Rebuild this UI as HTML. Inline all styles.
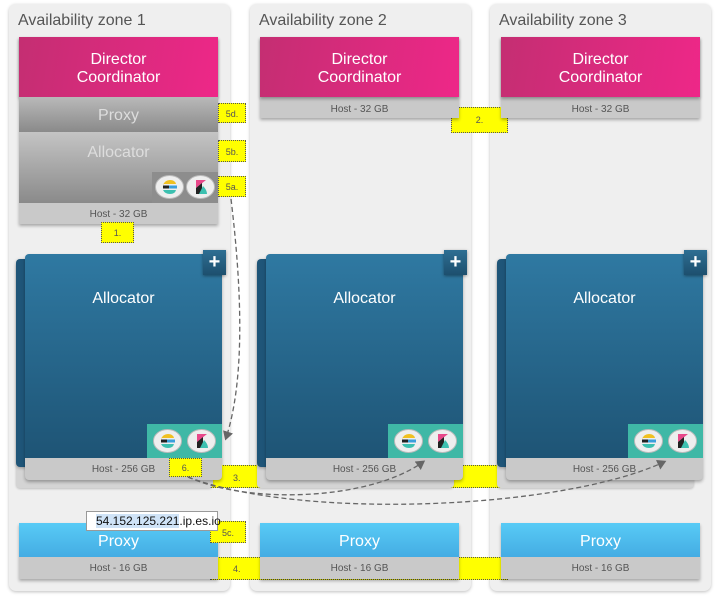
<!DOCTYPE html>
<html><head><style>
*{box-sizing:border-box;margin:0;padding:0}
body{width:718px;height:598px;background:#fff;position:relative;overflow:hidden;font-family:"Liberation Sans",Arial,sans-serif}
.abs{position:absolute}
.zone{position:absolute;top:4px;width:221px;height:587px;background:#efefef;border-radius:7px;box-shadow:0 1px 3px rgba(0,0,0,.25)}
.zt{position:absolute;left:9px;top:8px;font-size:16px;color:#555}
.dir{position:absolute;height:60px;width:199px;background:linear-gradient(100deg,#c42e72,#ee2788);color:#fff;font-size:16px;text-align:center;line-height:18px;padding-top:14px;box-shadow:0 2px 3px rgba(0,0,0,.3)}
.host{position:absolute;background:#c9c9c9;color:#555;font-size:10px;text-align:center;box-shadow:0 2px 3px rgba(0,0,0,.3)}
.y{position:absolute;background:#ffff00;border:1px dotted #555;font-size:9px;color:#555;text-align:center}
.back{position:absolute;background:#1f5578;border-radius:4px;box-shadow:0 1px 3px rgba(0,0,0,.3)}
.backh{position:absolute;background:#d4d4d4;border-radius:4px;box-shadow:0 1px 2px rgba(0,0,0,.2)}
.alloc{position:absolute;width:197px;height:204px;background:linear-gradient(#2f79a2,#1e5475);border-radius:4px 4px 0 0;color:#fff;font-size:16px;text-align:center;padding-top:36px}
.plus{position:absolute;width:23px;height:25px;background:linear-gradient(#2e6f93,#1d4f6e);color:#fff;font-size:20px;font-weight:bold;text-align:center;line-height:24px;box-shadow:0 1px 3px rgba(0,0,0,.4)}
.bar{position:absolute;width:75px;height:34px;background:#3fb8a6}
.ic{position:absolute;width:29px;height:24px}
.prox{position:absolute;width:199px;height:34px;background:linear-gradient(#58cbf6,#44ace3);color:#fff;font-size:16px;text-align:center;line-height:37px}
</style></head><body>
<svg width="0" height="0" style="position:absolute">
<defs>
<g id="es"><ellipse cx="14.5" cy="12" rx="14" ry="11.5" fill="#eee" stroke="#bbb" stroke-width="1"/>
<path d="M8,10 Q10,5 15,5 Q20,5 21,9 L8,9Z" fill="#f0c020"/>
<rect x="8" y="10.5" width="6" height="3" fill="#222"/><rect x="14" y="10.5" width="8" height="3" fill="#3a9fdc"/>
<path d="M8,15 L21,15 Q20,19 15,19 Q10,19 8,15Z" fill="#3cc0b0"/></g>
<g id="kb"><ellipse cx="14.5" cy="12" rx="14" ry="11.5" fill="#eee" stroke="#bbb" stroke-width="1"/>
<path d="M10,5 L20,5 L10,13Z" fill="#e8488a"/><path d="M10,13 L16,8 L16,19 L10,19Z" fill="#222"/>
<path d="M13,19 L17,11 Q21,15 21,19Z" fill="#3cc0b0"/></g>
</defs></svg>

<div class="zone" style="left:9px"><div class="zt">Availability zone 1</div></div>
<div class="zone" style="left:250px"><div class="zt">Availability zone 2</div></div>
<div class="zone" style="left:490px"><div class="zt">Availability zone 3</div></div>

<div class="y" style="left:210px;top:465px;width:298px;height:23px;line-height:24px;text-align:left;padding-left:22px">3.</div>
<div class="y" style="left:210px;top:557px;width:298px;height:23px;line-height:22px;text-align:left;padding-left:22px">4.</div>
<div class="y" style="left:451px;top:107px;width:57px;height:26px;line-height:24px">2.</div>

<div class="host" style="left:19px;top:37px;width:199px;height:187px;padding-top:172px">Host - 32 GB</div>
<div class="dir" style="left:19px;top:37px">Director<br>Coordinator</div>
<div class="abs" style="left:19px;top:97px;width:199px;height:35px;background:linear-gradient(#b9b9b9,#8a8a8a);color:#ddd;font-size:16px;text-align:center;line-height:37px">Proxy</div>
<div class="abs" style="left:19px;top:132px;width:199px;height:71px;background:linear-gradient(#c4c4c4,#8a8a8a);color:#ddd;font-size:16px;text-align:center;padding-top:12px">Allocator</div>
<div class="abs" style="left:152px;top:172px;width:66px;height:31px;background:#8d8d8d"></div>
<svg class="ic" style="left:155px;top:175px"><use href="#es"/></svg><svg class="ic" style="left:186px;top:175px"><use href="#kb"/></svg>
<div class="y" style="left:101px;top:222px;width:33px;height:21px;line-height:20px">1.</div>
<div class="y" style="left:218px;top:103px;width:28px;height:20px;line-height:20px">5d.</div>
<div class="y" style="left:218px;top:140px;width:28px;height:22px;line-height:22px">5b.</div>
<div class="y" style="left:218px;top:176px;width:28px;height:21px;line-height:21px">5a.</div>

<div class="host" style="left:260px;top:37px;width:199px;height:81px;padding-top:67px">Host - 32 GB</div>
<div class="dir" style="left:260px;top:37px">Director<br>Coordinator</div>
<div class="host" style="left:501px;top:37px;width:199px;height:81px;padding-top:67px">Host - 32 GB</div>
<div class="dir" style="left:501px;top:37px">Director<br>Coordinator</div>

<div class="backh" style="left:16px;top:262px;width:197px;height:226px"></div>
<div class="back" style="left:16px;top:259px;width:197px;height:208px"></div>
<div class="host" style="left:25px;top:254px;width:197px;height:226px;padding-top:210px;border-radius:4px">Host - 256 GB</div>
<div class="alloc" style="left:25px;top:254px">Allocator</div>
<div class="plus" style="left:203px;top:250px">+</div>
<div class="bar" style="left:147px;top:424px"></div>
<svg class="ic" style="left:153px;top:429px"><use href="#es"/></svg><svg class="ic" style="left:187px;top:429px"><use href="#kb"/></svg>

<div class="backh" style="left:257px;top:262px;width:197px;height:226px"></div>
<div class="back" style="left:257px;top:259px;width:197px;height:208px"></div>
<div class="host" style="left:266px;top:254px;width:197px;height:226px;padding-top:210px;border-radius:4px">Host - 256 GB</div>
<div class="alloc" style="left:266px;top:254px">Allocator</div>
<div class="plus" style="left:444px;top:250px">+</div>
<div class="bar" style="left:388px;top:424px"></div>
<svg class="ic" style="left:394px;top:429px"><use href="#es"/></svg><svg class="ic" style="left:428px;top:429px"><use href="#kb"/></svg>

<div class="backh" style="left:497px;top:262px;width:197px;height:226px"></div>
<div class="back" style="left:497px;top:259px;width:197px;height:208px"></div>
<div class="host" style="left:506px;top:254px;width:197px;height:226px;padding-top:210px;border-radius:4px">Host - 256 GB</div>
<div class="alloc" style="left:506px;top:254px">Allocator</div>
<div class="plus" style="left:684px;top:250px">+</div>
<div class="bar" style="left:628px;top:424px"></div>
<svg class="ic" style="left:634px;top:429px"><use href="#es"/></svg><svg class="ic" style="left:668px;top:429px"><use href="#kb"/></svg>

<div class="y" style="left:169px;top:458px;width:33px;height:19px;line-height:18px">6.</div>

<div class="host" style="left:19px;top:523px;width:199px;height:56px;padding-top:40px">Host - 16 GB</div>
<div class="prox" style="left:19px;top:523px">Proxy</div>
<div class="host" style="left:260px;top:523px;width:199px;height:56px;padding-top:40px">Host - 16 GB</div>
<div class="prox" style="left:260px;top:523px">Proxy</div>
<div class="host" style="left:501px;top:523px;width:199px;height:56px;padding-top:40px">Host - 16 GB</div>
<div class="prox" style="left:501px;top:523px">Proxy</div>
<div class="y" style="left:210px;top:521px;width:36px;height:22px;line-height:22px">5c.</div>
<div class="abs" style="left:86px;top:511px;width:132px;height:20px;background:#fff;border:1px solid #999;font-size:12px;line-height:18px;padding-left:9px;color:#111"><span style="background:#cfe3f7">54.152.125.221</span>.ip.es.io</div>

<svg class="abs" style="left:0;top:0" width="718" height="598">
<defs><marker id="a" markerWidth="8" markerHeight="8" refX="5" refY="4" orient="auto"><path d="M0,0 L7,4 L0,8Z" fill="#666"/></marker></defs>
<g fill="none" stroke="#666" stroke-width="1.3" stroke-dasharray="5,3">
<path d="M231,199 C242,290 245,380 226,438" marker-end="url(#a)"/>
<path d="M188,477 C250,505 370,500 423,462" marker-end="url(#a)"/>
<path d="M188,477 C300,520 560,510 664,462" marker-end="url(#a)"/>
</g>
</svg>
</body></html>
